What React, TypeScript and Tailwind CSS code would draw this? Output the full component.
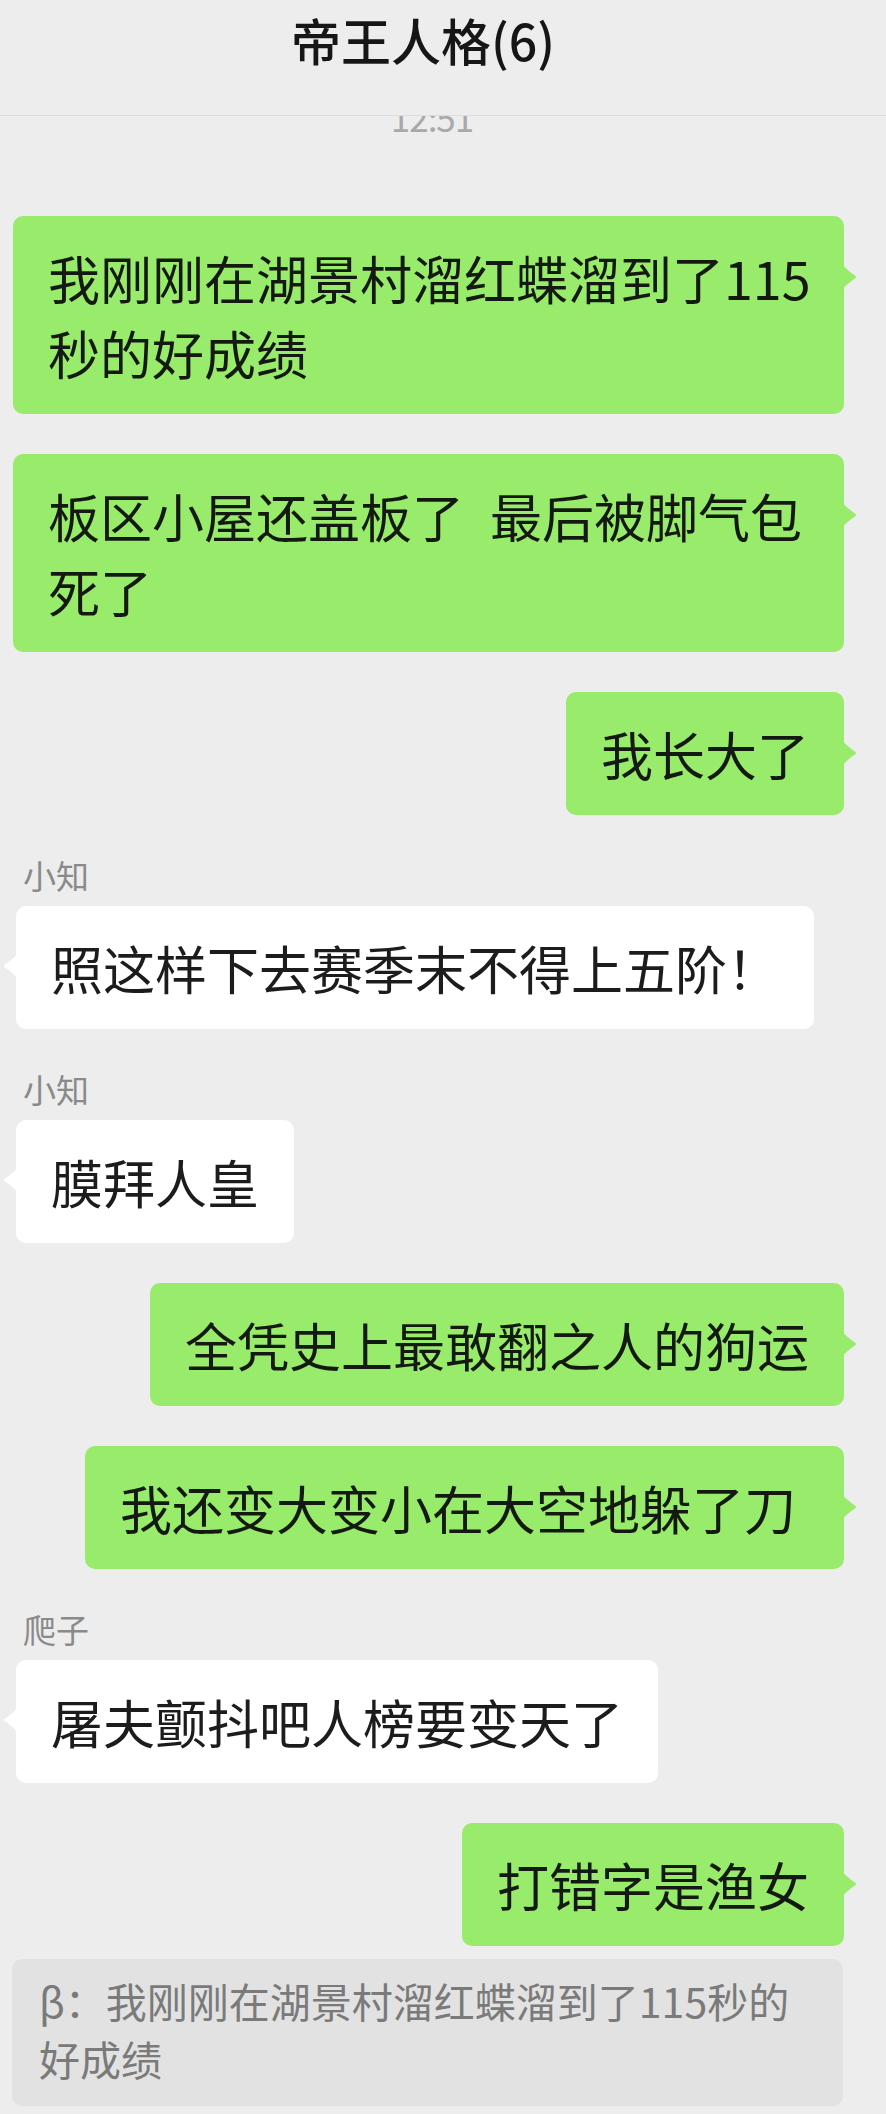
const font = { fontFamily: '"Noto Sans CJK SC", "Noto Sans", sans-serif' }

interface Message {
  id: number
  side: 'left' | 'right'
  name?: string
  text: string
  pad?: string
}

const messages: Message[] = [
  { id: 1, side: 'right', text: '我刚刚在湖景村溜红蝶溜到了115秒的好成绩', pad: 'pl-[35px] pr-[28px]' },
  { id: 2, side: 'right', text: '板区小屋还盖板了\u2002最后被脚气包死了', pad: 'pl-[35px] pr-[28px]' },
  { id: 3, side: 'right', text: '我长大了' },
  { id: 4, side: 'left', name: '小知', text: '照这样下去赛季末不得上五阶！' },
  { id: 5, side: 'left', name: '小知', text: '膜拜人皇' },
  { id: 6, side: 'right', text: '全凭史上最敢翻之人的狗运' },
  { id: 7, side: 'right', text: '我还变大变小在大空地躲了刀', pad: 'pl-[35px] pr-[48px]' },
  { id: 8, side: 'left', name: '爬子', text: '屠夫颤抖吧人榜要变天了' },
  { id: 9, side: 'right', text: '打错字是渔女' },
]

function Tail({ side, color }: { side: 'left' | 'right'; color: string }) {
  if (side === 'right') {
    return (
      <svg className="absolute top-[48px] -right-[14px]" width="16" height="26" viewBox="0 0 16 26">
        <path d="M0 0 C3 4 9 9 13 11.5 Q15 13 13 14.5 C9 17 3 22 0 26 Z" fill={color} />
      </svg>
    )
  }
  return (
    <svg className="absolute top-[47px] -left-[14px]" width="16" height="26" viewBox="0 0 16 26">
      <path d="M16 0 C13 4 7 9 3 11.5 Q1 13 3 14.5 C7 17 13 22 16 26 Z" fill={color} />
    </svg>
  )
}

function Bubble({ msg }: { msg: Message }) {
  const right = msg.side === 'right'
  return (
    <div className={right ? 'flex flex-col items-end pr-[42px]' : 'flex flex-col items-start pl-[16px]'}>
      {msg.name && (
        <div className="pl-[7px] mb-[11px] text-[33px] leading-[40px] text-[#8a8a8a]">{msg.name}</div>
      )}
      <div
        className={`relative rounded-[10px] py-[24px] text-[52px] leading-[75px] ${msg.pad ?? 'px-[35px]'} ${
          right ? 'max-w-[831px] bg-[#98eb6b] text-[#141a12]' : 'max-w-[800px] bg-white text-[#1c1c1c]'
        }`}
      >
        {msg.text}
        <Tail side={msg.side} color={right ? '#98eb6b' : '#ffffff'} />
      </div>
    </div>
  )
}

export default function App() {
  return (
    <div className="min-h-[2114px] w-full bg-[#ededed]" style={font}>
      <header className="h-[116px] border-b border-[#dcdcdc] flex justify-center pr-[40px] pt-[9px]">
        <h1 className="text-[50px] leading-[60px] font-medium text-[#161616]">帝王人格(6)</h1>
      </header>

      <main className="overflow-hidden pb-[7px]">
        {/* 时间戳被标题栏遮住上半截 */}
        <div className="-mt-[17px] pr-[22px] text-center text-[35px] leading-[36px] tracking-[-1px] text-[#a9a9a9]">
          12:51
        </div>

        <div className="mt-[81px] flex flex-col gap-[40px]">
          {messages.map((m) => (
            <Bubble key={m.id} msg={m} />
          ))}
        </div>

        <div className="mt-[13px] mx-[12px] w-[831px] rounded-[10px] bg-[#e2e2e2] pl-[27px] pr-[27px] pt-[12px] pb-[19px] text-[41px] leading-[58px] text-[#7a7a7a]">
          β：我刚刚在湖景村溜红蝶溜到了115秒的好成绩
        </div>
      </main>
    </div>
  )
}
